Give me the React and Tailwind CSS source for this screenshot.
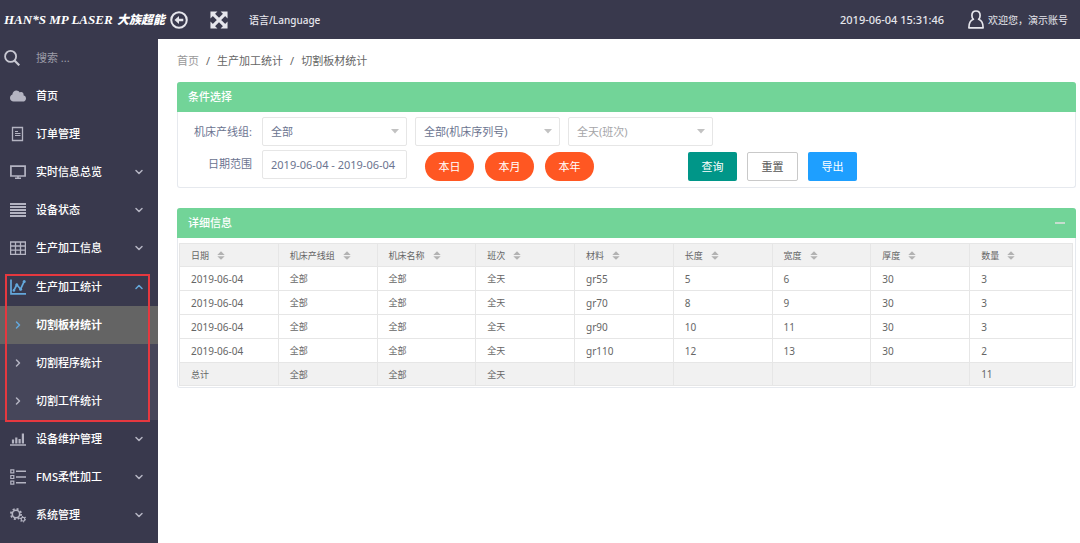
import { useState } from 'react';
import { FaCloud } from 'react-icons/fa';
import { ChevronDown, ChevronRight, ChevronUp } from 'lucide-react';

const Svg = ({ children, className = 'w-4 h-4' }) => (
  <svg viewBox="0 0 16 16" fill="none" stroke="currentColor" className={className} aria-hidden="true">
    {children}
  </svg>
);

const SearchIcon = () => (
  <Svg>
    <circle cx="6.6" cy="6.4" r="5.5" strokeWidth="1.8" />
    <path d="M10.5 10.5L15.3 15.3" strokeWidth="2.2" />
  </Svg>
);

const BackIcon = () => (
  <Svg className="w-[18px] h-[18px]">
    <circle cx="8" cy="8" r="6.9" strokeWidth="1.8" />
    <path d="M4 8L8 4.4V6.8H11.8V9.2H8V11.6Z" fill="currentColor" stroke="none" />
  </Svg>
);

const FullscreenIcon = () => (
  <Svg className="w-[18px] h-[18px]">
    <path d="M3 3L13 13M13 3L3 13" strokeWidth="2.8" />
    <path d="M0.4 0.4H6.6L0.4 6.6ZM15.6 0.4V6.6L9.4 0.4ZM0.4 15.6V9.4L6.6 15.6ZM15.6 15.6H9.4L15.6 9.4Z" fill="currentColor" stroke="none" />
  </Svg>
);

const UserIcon = () => (
  <svg viewBox="0 0 16 19" fill="none" stroke="currentColor" strokeWidth="1.7" strokeLinejoin="round" className="w-4 h-[19px]" aria-hidden="true">
    <path d="M5.4 9.3C4.3 8.3 3.9 6.8 3.9 5.4C3.9 2.8 5.6 1 8 1S12.1 2.8 12.1 5.4C12.1 6.8 11.7 8.3 10.6 9.3C13.5 10.3 15.1 12.6 15.1 17.8H0.9C0.9 12.6 2.5 10.3 5.4 9.3Z" />
  </svg>
);

const DocIcon = () => (
  <Svg>
    <path d="M2.5 1.5H12.5V14.5H2.5Z" strokeWidth="1.3" />
    <path d="M5 5.5H8M5 7.5H10.5M5 9.5H10.5" strokeWidth="1.2" />
  </Svg>
);

const ScreenIcon = () => (
  <Svg>
    <path d="M0.9 2.1H15.1V12H0.9Z" strokeWidth="1.7" />
    <path d="M5 14.2H11M8 12V14" strokeWidth="1.6" />
  </Svg>
);

const LinesIcon = () => (
  <Svg>
    <path d="M0 2H16M0 5H16M0 8H16M0 11H16M0 14H16" strokeWidth="2" />
  </Svg>
);

const GridIcon = () => (
  <Svg>
    <path d="M0.6 2H15.4V14.4H0.6ZM0.6 6H15.4M0.6 10.2H15.4M5.5 2V14.4M10.5 2V14.4" strokeWidth="1.3" />
  </Svg>
);

const ChartIcon = () => (
  <Svg>
    <path d="M1 0.5V14.8H16" strokeWidth="1.7" />
    <path d="M3.8 11.5L6.8 5.8L10.6 10.2L14.2 2.4" strokeWidth="1.7" />
    <g fill="currentColor" stroke="none">
      <circle cx="3.9" cy="11.4" r="1.3" />
      <circle cx="6.8" cy="5.8" r="1.5" />
      <circle cx="10.6" cy="10.2" r="1.5" />
      <circle cx="14.2" cy="2.6" r="1.5" />
    </g>
  </Svg>
);

const BarsIcon = () => (
  <Svg>
    <path d="M0 14H16" strokeWidth="1.5" />
    <path d="M3 8.5V12.5M6.3 6.5V12.5M9.6 8V12.5M12.9 2.5V12.5" strokeWidth="2.2" />
  </Svg>
);

const ListIcon = () => (
  <Svg>
    <path d="M0.8 0.8H3.8V3.8H0.8ZM0.8 6.5H3.8V9.5H0.8ZM0.8 12.2H3.8V15.2H0.8Z" strokeWidth="1.2" />
    <path d="M6 2.3H16M6 8H16M6 13.7H16" strokeWidth="1.5" />
  </Svg>
);

const GearsIcon = () => (
  <Svg>
    <circle cx="6" cy="7" r="3.7" strokeWidth="1.6" />
    <circle cx="6" cy="7" r="5.1" strokeWidth="1.8" strokeDasharray="2 2.005" />
    <circle cx="13" cy="12.2" r="1.8" strokeWidth="1.2" />
    <circle cx="13" cy="12.2" r="2.7" strokeWidth="1.2" strokeDasharray="1.2 1.627" />
  </Svg>
);

const topItems = [
  { label: '首页', icon: <FaCloud className="w-4 h-4" /> },
  { label: '订单管理', icon: <DocIcon /> },
  { label: '实时信息总览', icon: <ScreenIcon />, more: true },
  { label: '设备状态', icon: <LinesIcon />, more: true },
  { label: '生产加工信息', icon: <GridIcon />, more: true },
];

const bottomItems = [
  { label: '设备维护管理', icon: <BarsIcon />, more: true },
  { label: 'FMS柔性加工', icon: <ListIcon />, more: true },
  { label: '系统管理', icon: <GearsIcon />, more: true },
];

const subItems = ['切割板材统计', '切割程序统计', '切割工件统计'];

const columns = ['日期', '机床产线组', '机床名称', '班次', '材料', '长度', '宽度', '厚度', '数量'];

const rows = [
  ['2019-06-04', '全部', '全部', '全天', 'gr55', '5', '6', '30', '3'],
  ['2019-06-04', '全部', '全部', '全天', 'gr70', '8', '9', '30', '3'],
  ['2019-06-04', '全部', '全部', '全天', 'gr90', '10', '11', '30', '3'],
  ['2019-06-04', '全部', '全部', '全天', 'gr110', '12', '13', '30', '2'],
];

const total = ['总计', '全部', '全部', '全天', '', '', '', '', '11'];

const MenuItem = ({ label, icon, more }) => (
  <li>
    <a href="#" className="flex items-center h-[38px] pl-[10px] pr-[13px] text-white">
      <span className="w-[26px] text-[#b4b4c2]">{icon}</span>
      <span className="flex-1">{label}</span>
      {more && <ChevronDown className="w-3 h-3 text-[#b4b4c2]" strokeWidth={3} />}
    </a>
  </li>
);

const Sidebar = () => {
  const [current, setCurrent] = useState(subItems[0]);

  return (
    <nav className="w-[158px] shrink-0 bg-[#39394d] font-medium">
      <label className="flex items-center h-[38px] pl-1">
        <span className="w-8 text-[#c8c8d2]"><SearchIcon /></span>
        <input type="search" placeholder="搜索 ..." aria-label="搜索" className="w-24 bg-transparent outline-none font-normal placeholder:text-[#9c9ca8]" />
      </label>
      <ul>
        {topItems.map((item) => <MenuItem key={item.label} {...item} />)}
        <li className="relative">
          <a href="#" className="flex items-center h-[39px] pl-[10px] pr-[13px] text-white">
            <span className="w-[26px] text-[#64a8dc]"><ChartIcon /></span>
            <span className="flex-1">生产加工统计</span>
            <ChevronUp className="w-3 h-3 text-[#64a8dc]" strokeWidth={3} />
          </a>
          <ul className="bg-[#46465a]">
            {subItems.map((label) => (
              <li key={label}>
                <a
                  href="#"
                  onClick={() => setCurrent(label)}
                  className={`flex items-center h-[38px] pl-3 text-white ${current === label ? 'bg-[#646464] font-bold' : ''}`}
                >
                  <span className={`w-6 ${current === label ? 'text-[#64a8dc]' : 'text-[#b4b4c2]'}`}>
                    <ChevronRight className="w-3 h-3" strokeWidth={3} />
                  </span>
                  {label}
                </a>
              </li>
            ))}
          </ul>
          {/* highlight frame around the open group */}
          <div className="absolute top-[7px] -bottom-0.5 left-[5px] right-2 border-2 border-[#e5383f] pointer-events-none" />
        </li>
        {bottomItems.map((item) => <MenuItem key={item.label} {...item} />)}
      </ul>
    </nav>
  );
};

const Header = () => (
  <header className="flex items-center h-[39px] pl-1 pr-3 bg-[#39394d] text-[#e6e6ec] font-medium">
    <h1 className="flex items-center whitespace-nowrap text-white italic">
      <span className="w-[113px] font-['Liberation_Serif',serif] text-[13px] font-bold">HAN*S MP LASER</span>
      <span className="text-[12px] font-black">大族超能</span>
    </h1>
    <button type="button" aria-label="返回" className="ml-[5px]"><BackIcon /></button>
    <button type="button" aria-label="全屏" className="ml-[22px]"><FullscreenIcon /></button>
    <a href="#" className="ml-[21px] text-[10px]">语言/Language</a>
    <time className="ml-auto">2019-06-04 15:31:46</time>
    <a href="#" className="flex items-center gap-1 ml-6 text-[10px] font-normal">
      <UserIcon />
      欢迎您，演示账号
    </a>
  </header>
);

const Select = ({ label, disabled, children }) => (
  <div className="relative w-[145px]">
    <select
      aria-label={label}
      disabled={disabled}
      className="appearance-none w-full h-[29px] px-2 bg-white border border-[#e6e6e6] rounded-[2px] text-[#6b7490] disabled:text-[#a5a5a8] disabled:opacity-100"
    >
      {children}
    </select>
    <svg viewBox="0 0 8 5" className="absolute right-2 top-3 w-2 h-[5px] text-[#c2c2c2] pointer-events-none" aria-hidden="true">
      <path d="M0 0H8L4 4.6Z" fill="currentColor" />
    </svg>
  </div>
);

const Pill = ({ children }) => (
  <button type="button" className="w-[49px] h-[29px] rounded-full bg-[#ff5722] text-white">{children}</button>
);

const SortIcon = () => (
  <svg viewBox="0 0 8 9" className="w-2 h-[9px] text-[#b2b2b2]" aria-hidden="true">
    <path d="M0.3 4L4 0.3L7.7 4ZM0.3 5.2H7.7L4 8.8Z" fill="currentColor" />
  </svg>
);

const Panel = ({ title, action, children }) => (
  <section className="border border-[#e6e9ee] border-t-0 rounded-[3px]">
    <div className="flex items-center justify-between h-[30px] -mx-px px-[11px] rounded-t-[3px] bg-[#72d498] text-white">
      <h2 className="font-medium">{title}</h2>
      {action}
    </div>
    {children}
  </section>
);

const cellText = (value) => (/^[\w-]+$/.test(value) ? 'text-[10px]' : 'text-[9px]');

const cell = 'h-[23px] py-0 pl-[11px] border border-[#e6e6e6] text-left font-normal leading-none';

export default function App() {
  return (
    <div className="flex flex-col min-h-screen bg-white font-['Noto_Sans','Noto_Sans_CJK_SC',sans-serif] text-[11px] leading-4">
      <Header />
      <div className="flex flex-1">
        <Sidebar />
        <main className="flex-1 min-w-0 pl-[19px] pr-1">
          <nav aria-label="breadcrumb" className="flex items-center gap-[7px] h-[43px] text-[#666]">
            <a href="#" className="text-[#999]">首页</a>
            <span>/</span>
            <a href="#">生产加工统计</a>
            <span>/</span>
            <span>切割板材统计</span>
          </nav>

          <Panel title="条件选择">
            <form className="flex flex-col gap-1 pt-[5px] pb-1.5 text-[#6b7490]" onSubmit={(e) => e.preventDefault()}>
              <div className="flex items-center gap-2">
                <span className="w-[76px] pr-0.5 text-right">机床产线组:</span>
                <Select label="机床产线组"><option>全部</option></Select>
                <Select label="机床序列号"><option>全部(机床序列号)</option></Select>
                <Select label="班次" disabled><option>全天(班次)</option></Select>
              </div>
              <div className="flex items-start gap-2">
                <label htmlFor="range" className="w-[76px] pt-1.5 pr-0.5 text-right">日期范围</label>
                <input
                  id="range"
                  type="text"
                  defaultValue="2019-06-04 - 2019-06-04"
                  className="w-[145px] h-[29px] px-2 border border-[#e6e6e6] rounded-[2px]"
                />
                <div className="flex gap-[11px] pt-0.5 pl-[10px]">
                  <Pill>本日</Pill>
                  <Pill>本月</Pill>
                  <Pill>本年</Pill>
                </div>
                <div className="flex gap-[10px] pt-0.5 pl-[86px]">
                  <button type="submit" className="w-[49px] h-[29px] rounded-[2px] bg-[#009688] text-white">查询</button>
                  <button type="reset" className="w-[51px] h-[29px] rounded-[2px] border border-[#c9c9c9] text-[#555]">重置</button>
                  <button type="button" className="w-[49px] h-[29px] rounded-[2px] bg-[#1e9fff] text-white">导出</button>
                </div>
              </div>
            </form>
          </Panel>

          <div className="mt-5">
            <Panel
              title="详细信息"
              action={<button type="button" aria-label="收起" className="w-[10px] h-[2px] bg-[#c6ddcf]" />}
            >
              <div className="pt-[5px] pb-px pl-px pr-0.5">
                <table className="w-full h-[143px] table-fixed border-collapse text-[#666]">
                  <thead>
                    <tr className="bg-[#f1f1f1]">
                      {columns.map((name, i) => (
                        <th key={name} scope="col" className={`${cell} text-[9px] ${i < 8 ? 'w-[11.06%]' : ''}`}>
                          <span className="flex items-center gap-2">{name}<SortIcon /></span>
                        </th>
                      ))}
                    </tr>
                  </thead>
                  <tbody>
                    {rows.map((row, r) => (
                      <tr key={r}>
                        {row.map((value, i) => <td key={i} className={`${cell} ${cellText(value)}`}>{value}</td>)}
                      </tr>
                    ))}
                  </tbody>
                  <tfoot>
                    <tr className="bg-[#f1f1f1]">
                      {total.map((value, i) => <td key={i} className={`${cell} ${cellText(value)}`}>{value}</td>)}
                    </tr>
                  </tfoot>
                </table>
              </div>
            </Panel>
          </div>
        </main>
      </div>
    </div>
  );
}
